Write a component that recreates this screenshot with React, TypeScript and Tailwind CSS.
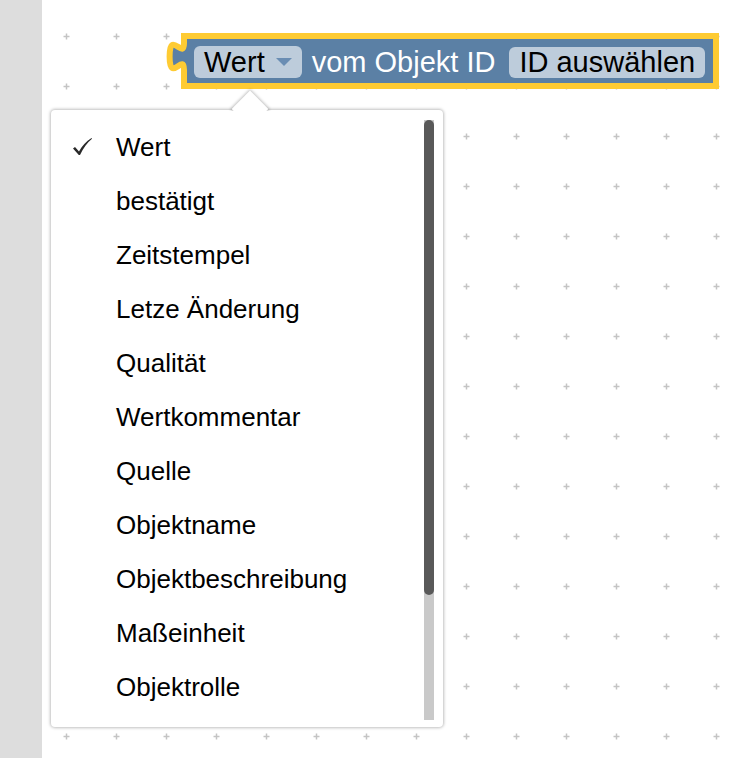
import React from 'react';

const items = [
  'Wert',
  'bestätigt',
  'Zeitstempel',
  'Letze Änderung',
  'Qualität',
  'Wertkommentar',
  'Quelle',
  'Objektname',
  'Objektbeschreibung',
  'Maßeinheit',
  'Objektrolle',
];

function GridDots() {
  return (
    <svg className="absolute inset-0 w-full h-full" aria-hidden>
      <defs>
        <pattern id="grid" x="0" y="0" width="50" height="50" patternUnits="userSpaceOnUse">
          <rect x="21.5" y="35.75" width="6" height="1.5" fill="#c4c4c4" />
          <rect x="23.75" y="33.5" width="1.5" height="6" fill="#c4c4c4" />
        </pattern>
      </defs>
      <rect width="100%" height="100%" fill="url(#grid)" />
    </svg>
  );
}

function Block() {
  return (
    <div className="absolute left-[142px] top-[36px] w-[532px] h-[50px]">
      {/* block shape with output tab */}
      <svg className="absolute left-[-20px] top-0 overflow-visible" width="552" height="50">
        <path
          d="M 20,0 H 552 V 50 H 20 V 34 C 20,16 5.6,48.4 5.6,20.5 C 5.6,-7.4 20,25 20,7 Z"
          fill="#5b80a5"
          stroke="#fecb33"
          strokeWidth="6"
        />
      </svg>
      <div className="relative flex items-center h-full pl-[10px] pt-[2px] font-['Liberation_Sans',Arial,sans-serif] text-[29px] leading-none">
        <div className="flex items-center h-[32px] rounded-[6px] bg-[#bdccdb] pl-[10px] pr-[10px] text-black">
          <span>Wert</span>
          <svg className="ml-[11px]" width="16" height="8" viewBox="0 0 16 8">
            <path d="M0 0 H16 L8 8 Z" fill="#6a8db3" />
          </svg>
        </div>
        <span className="ml-[10px] text-white">vom Objekt ID</span>
        <div className="ml-[14px] flex items-center h-[31px] rounded-[6px] bg-[#bdccdb] px-[10px] text-black">
          ID auswählen
        </div>
      </div>
    </div>
  );
}

function Check() {
  return (
    <svg width="22" height="20" viewBox="0 0 22 20">
      <path
        d="M1 11.5 L3 10 L7 14.5 C10 9 14 4.5 19.5 1 L20 1.8 C15 6 11.5 11 8 18 L6.8 18 Z"
        fill="#2a2a2a"
      />
    </svg>
  );
}

function DropdownMenu() {
  return (
    <>
      <div className="absolute left-[9px] top-[110px] w-[392px] h-[617px] bg-white rounded-[4px] shadow-[0_0_3px_1px_rgba(0,0,0,0.25)] overflow-hidden">
        <div className="pt-[10px] font-['Liberation_Sans',Arial,sans-serif] text-[26px] text-black">
          {items.map((item, i) => (
            <div key={item} className="flex items-center h-[54px]">
              <div className="w-[65px] pl-[21px] flex items-center">
                {i === 0 && <Check />}
              </div>
              <span className="leading-none">{item}</span>
            </div>
          ))}
        </div>
        {/* scrollbar */}
        <div className="absolute left-[373px] top-[10px] w-[10px] h-[600px] bg-[#c9c9c9]">
          <div className="w-full h-[475px] rounded-full bg-[#595959]" />
        </div>
      </div>
      {/* pointer arrow */}
      <div className="absolute left-[184px] top-[86px] w-[48px] h-[25px] overflow-hidden">
        <div className="absolute left-[11px] top-[9.5px] w-[26px] h-[26px] rotate-45 bg-white shadow-[0_0_3px_1px_rgba(0,0,0,0.25)]" />
      </div>
    </>
  );
}

export default function App() {
  return (
    <div className="flex w-[746px] h-[758px] bg-white overflow-hidden">
      <div className="w-[42px] shrink-0 bg-[#dddddd]" />
      <div className="relative flex-1">
        <GridDots />
        <Block />
        <DropdownMenu />
      </div>
    </div>
  );
}
